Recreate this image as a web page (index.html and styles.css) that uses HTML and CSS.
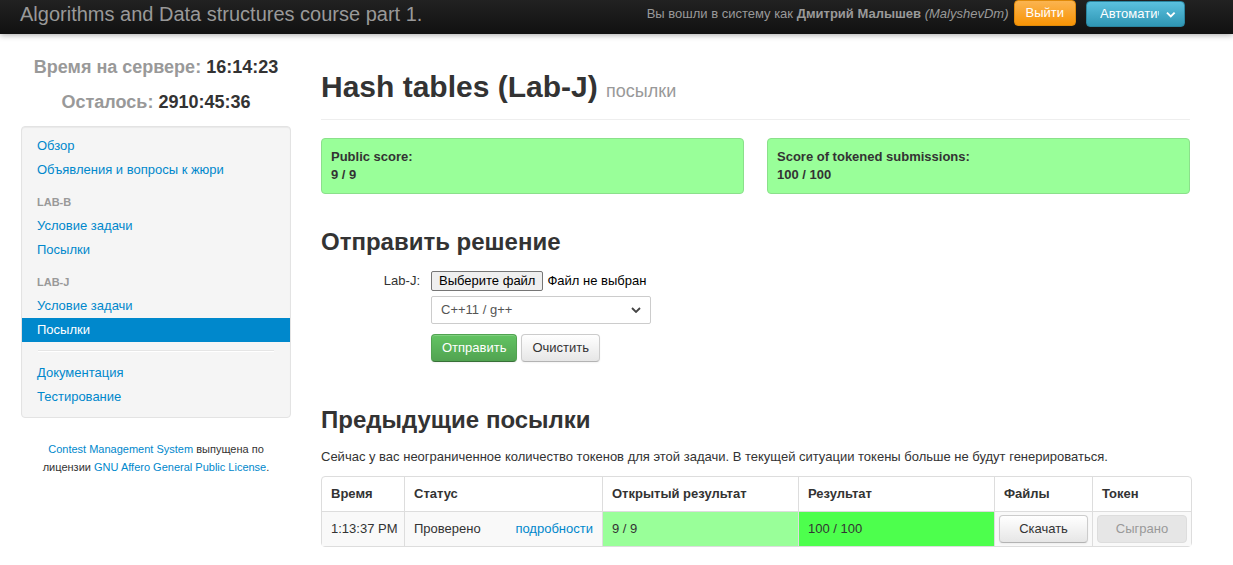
FILE: index.html
```html
<!DOCTYPE html>
<html lang="ru">
<head>
<meta charset="utf-8">
<title>Hash tables (Lab-J)</title>
<link rel="stylesheet" href="styles.css">
</head>
<body>
<div class="navbar">
  <div class="brand">Algorithms and Data structures course part 1.</div>
  <div class="nav-right">
    <span class="user-info">Вы вошли в систему как <b>Дмитрий Малышев</b> <i>(MalyshevDm)</i></span>
    <span class="btn-logout">Выйти</span>
    <span class="btn-lang"><span class="lang-text">Автоматически</span><svg class="caret" width="10" height="7" viewBox="0 0 10 7"><path d="M1 1.5 L5 5.5 L9 1.5" fill="none" stroke="#fff" stroke-width="2"/></svg></span>
  </div>
</div>

<div class="layout">
  <aside class="sidebar">
    <div class="clock"><span class="clock-label">Время на сервере:</span> 16:14:23</div>
    <div class="clock"><span class="clock-label">Осталось:</span> 2910:45:36</div>
    <ul class="well nav-list">
      <li><a href="#">Обзор</a></li>
      <li><a href="#">Объявления и вопросы к жюри</a></li>
      <li class="nav-header">LAB-B</li>
      <li><a href="#">Условие задачи</a></li>
      <li><a href="#">Посылки</a></li>
      <li class="nav-header">LAB-J</li>
      <li><a href="#">Условие задачи</a></li>
      <li class="active"><a href="#">Посылки</a></li>
      <li class="divider"></li>
      <li><a href="#">Документация</a></li>
      <li><a href="#">Тестирование</a></li>
    </ul>
    <div class="footer"><a href="#">Contest Management System</a> выпущена по лицензии <a href="#">GNU Affero General Public License</a>.</div>
  </aside>

  <main class="main">
    <div class="page-header">
      <h1>Hash tables (Lab-J) <small>посылки</small></h1>
    </div>
    <div class="scores">
      <div class="score-box"><b>Public score:</b><br><b>9 / 9</b></div>
      <div class="score-box"><b>Score of tokened submissions:</b><br><b>100 / 100</b></div>
    </div>

    <h2 class="h2-submit">Отправить решение</h2>
    <div class="form">
      <div class="form-row">
        <label class="form-label">Lab-J:</label>
        <div class="file-input"><span class="file-btn">Выберите файл</span><span class="file-name">Файл не выбран</span></div>
      </div>
      <div class="form-row">
        <span class="form-label"></span>
        <div class="select"><span>C++11 / g++</span><svg width="10" height="6" viewBox="0 0 10 6"><path d="M1 1 L5 5 L9 1" fill="none" stroke="#444" stroke-width="1.8"/></svg></div>
      </div>
      <div class="form-row row-actions">
        <span class="form-label"></span>
        <div class="actions"><span class="btn btn-success">Отправить</span><span class="btn">Очистить</span></div>
      </div>
    </div>

    <h2 class="h2-prev">Предыдущие посылки</h2>
    <p class="tokens">Сейчас у вас неограниченное количество токенов для этой задачи. В текущей ситуации токены больше не будут генерироваться.</p>
    <table class="subs">
      <colgroup><col style="width:82px"><col style="width:198px"><col style="width:196px"><col style="width:196px"><col style="width:98px"><col style="width:99px"></colgroup>
      <thead>
        <tr><th>Время</th><th>Статус</th><th>Открытый результат</th><th>Результат</th><th>Файлы</th><th>Токен</th></tr>
      </thead>
      <tbody>
        <tr>
          <td>1:13:37&nbsp;PM</td>
          <td><div class="status"><span>Проверено</span><a href="#">подробности</a></div></td>
          <td class="score-part">9 / 9</td>
          <td class="score-full">100 / 100</td>
          <td class="btn-cell"><span class="btn btn-block">Скачать</span></td>
          <td class="btn-cell"><span class="btn btn-block disabled">Сыграно</span></td>
        </tr>
      </tbody>
    </table>
  </main>
</div>
</body>
</html>
```

FILE: styles.css
```css
* { box-sizing: border-box; }
html, body { margin: 0; padding: 0; }
body {
  font-family: "Liberation Sans", Arial, sans-serif;
  font-size: 13px;
  line-height: 18px;
  color: #333;
  background: #fff;
}
a { color: #0088cc; text-decoration: none; }

/* navbar */
.navbar {
  height: 34px;
  background: linear-gradient(#222, #111);
  display: flex;
  align-items: flex-start;
  justify-content: space-between;
  padding: 0 48px 0 20px;
  box-shadow: 0 1px 6px rgba(0,0,0,0.35);
  position: relative;
  z-index: 1;
}
.brand {
  font-size: 20px;
  line-height: 26px;
  color: #999;
  padding-top: 1px;
}
.nav-right {
  display: flex;
  align-items: center;
  height: 27px;
}
.user-info { color: #999; margin-right: 5px; }
.user-info b { font-weight: bold; }
.btn-logout {
  display: inline-block;
  height: 26px;
  margin-top: -1px;
  padding: 3px 11px;
  color: #fff;
  background: linear-gradient(#fbb450, #f89406);
  border: 1px solid #e08a0a;
  border-radius: 4px;
  line-height: 18px;
  margin-right: 10px;
}
.btn-lang {
  display: inline-flex;
  align-items: center;
  width: 99px;
  height: 26px;
  margin-top: 1px;
  padding: 0 8px 0 13px;
  background: linear-gradient(#5bc0de, #2f96b4);
  border: 1px solid #2a85a0;
  border-radius: 4px;
  color: #fff;
}
.lang-text {
  width: 62px;
  overflow: hidden;
  white-space: nowrap;
}
.caret { margin-left: 7px; }

/* layout */
.layout {
  display: grid;
  grid-template-columns: 270px 869px;
  column-gap: 30px;
  padding-left: 21px;
}

/* sidebar */
.sidebar { padding-top: 22px; }
.clock {
  text-align: center;
  font-size: 18px;
  font-weight: bold;
  line-height: 22px;
  color: #333;
  margin-bottom: 13px;
}
.clock-label { color: #999; }
.well {
  background: #f5f5f5;
  border: 1px solid #e3e3e3;
  border-radius: 4px;
  box-shadow: inset 0 1px 1px rgba(0,0,0,0.05);
}
.nav-list {
  list-style: none;
  margin: 0;
  margin-top: 4px;
  padding: 7px 0 8px;
}
.nav-list li a {
  display: block;
  padding: 3px 15px;
  line-height: 18px;
}
.nav-list .nav-header {
  padding: 3px 15px;
  margin-top: 8px;
  font-size: 11px;
  font-weight: bold;
  color: #999;
  line-height: 18px;
  text-transform: uppercase;
}
.nav-list .active a {
  background: #0088cc;
  color: #fff;
}
.nav-list .divider {
  height: 2px;
  margin: 8px 16px 9px;
  background: #e5e5e5;
  border-bottom: 1px solid #fff;
}
.footer {
  margin-top: 22px;
  font-size: 11px;
  line-height: 18px;
  text-align: center;
  padding: 0 8px;
}

/* main */
.page-header {
  padding-top: 33px;
  padding-bottom: 8px;
  border-bottom: 1px solid #eee;
}
h1 {
  margin: 0;
  font-size: 30px;
  line-height: 40px;
  font-weight: bold;
}
h1 small {
  font-size: 18px;
  font-weight: normal;
  color: #999;
}
.scores {
  display: grid;
  grid-template-columns: 423px 423px;
  column-gap: 23px;
  margin-top: 18px;
}
.score-box {
  background: #99ff99;
  border: 1px solid #8be08b;
  border-radius: 4px;
  padding: 9px 9px;
  line-height: 18px;
}
h2 {
  margin: 0;
  font-size: 24px;
  font-weight: bold;
  line-height: 30px;
}
.h2-submit { margin-top: 33px; }
.form { margin-top: 14px; }
.form-row {
  display: flex;
  align-items: center;
  margin-bottom: 5px;
}
.form-label {
  width: 99px;
  text-align: right;
  margin-right: 11px;
  flex: none;
}
.file-input { display: flex; align-items: center; }
.file-btn {
  display: inline-block;
  height: 20px;
  padding: 0 7px;
  line-height: 18px;
  background: #efefef;
  border: 1px solid #767676;
  border-radius: 2px;
  color: #000;
  margin-right: 4px;
}
.file-name { color: #000; }
.select {
  width: 220px;
  height: 28px;
  border: 1px solid #ccc;
  border-radius: 2px;
  display: flex;
  align-items: center;
  justify-content: space-between;
  padding: 0 9px 0 9px;
  color: #555;
  background: #fff;
}
.row-actions { margin-top: 10px; }
.actions { display: flex; gap: 4px; }
.btn {
  display: inline-block;
  height: 28px;
  padding: 4px 10px;
  line-height: 18px;
  text-align: center;
  color: #333;
  background: linear-gradient(#fff, #e6e6e6);
  border: 1px solid #ccc;
  border-bottom-color: #b3b3b3;
  border-radius: 4px;
  box-shadow: inset 0 1px 0 rgba(255,255,255,0.2), 0 1px 2px rgba(0,0,0,0.05);
}
.btn-success {
  color: #fff;
  background: linear-gradient(#62c462, #51a351);
  border-color: #51a351 #51a351 #387038;
}
.btn-block { display: block; width: 100%; }
.btn.disabled {
  background: #e6e6e6;
  color: #999;
  box-shadow: none;
  border-color: #ddd;
}
.h2-prev { margin-top: 43px; }
.tokens { margin: 13px 0 10px; }

.subs {
  width: 869px;
  table-layout: fixed;
  border-collapse: separate;
  border-spacing: 0;
  border: 1px solid #ddd;
  border-radius: 4px;
}
.subs th, .subs td {
  padding: 8px 9px;
  line-height: 18px;
  text-align: left;
  vertical-align: top;
  border-left: 1px solid #ddd;
  white-space: nowrap;
}
.subs th:first-child, .subs td:first-child { border-left: 0; }
.subs th { font-weight: bold; }
.subs td { border-top: 1px solid #ddd; background: #f9f9f9; }
.subs .score-part { background: #99ff99; }
.subs .score-full { background: #4dff4d; }
.subs .btn-cell { padding: 3px 4px; }
.status { display: flex; justify-content: space-between; }
```
